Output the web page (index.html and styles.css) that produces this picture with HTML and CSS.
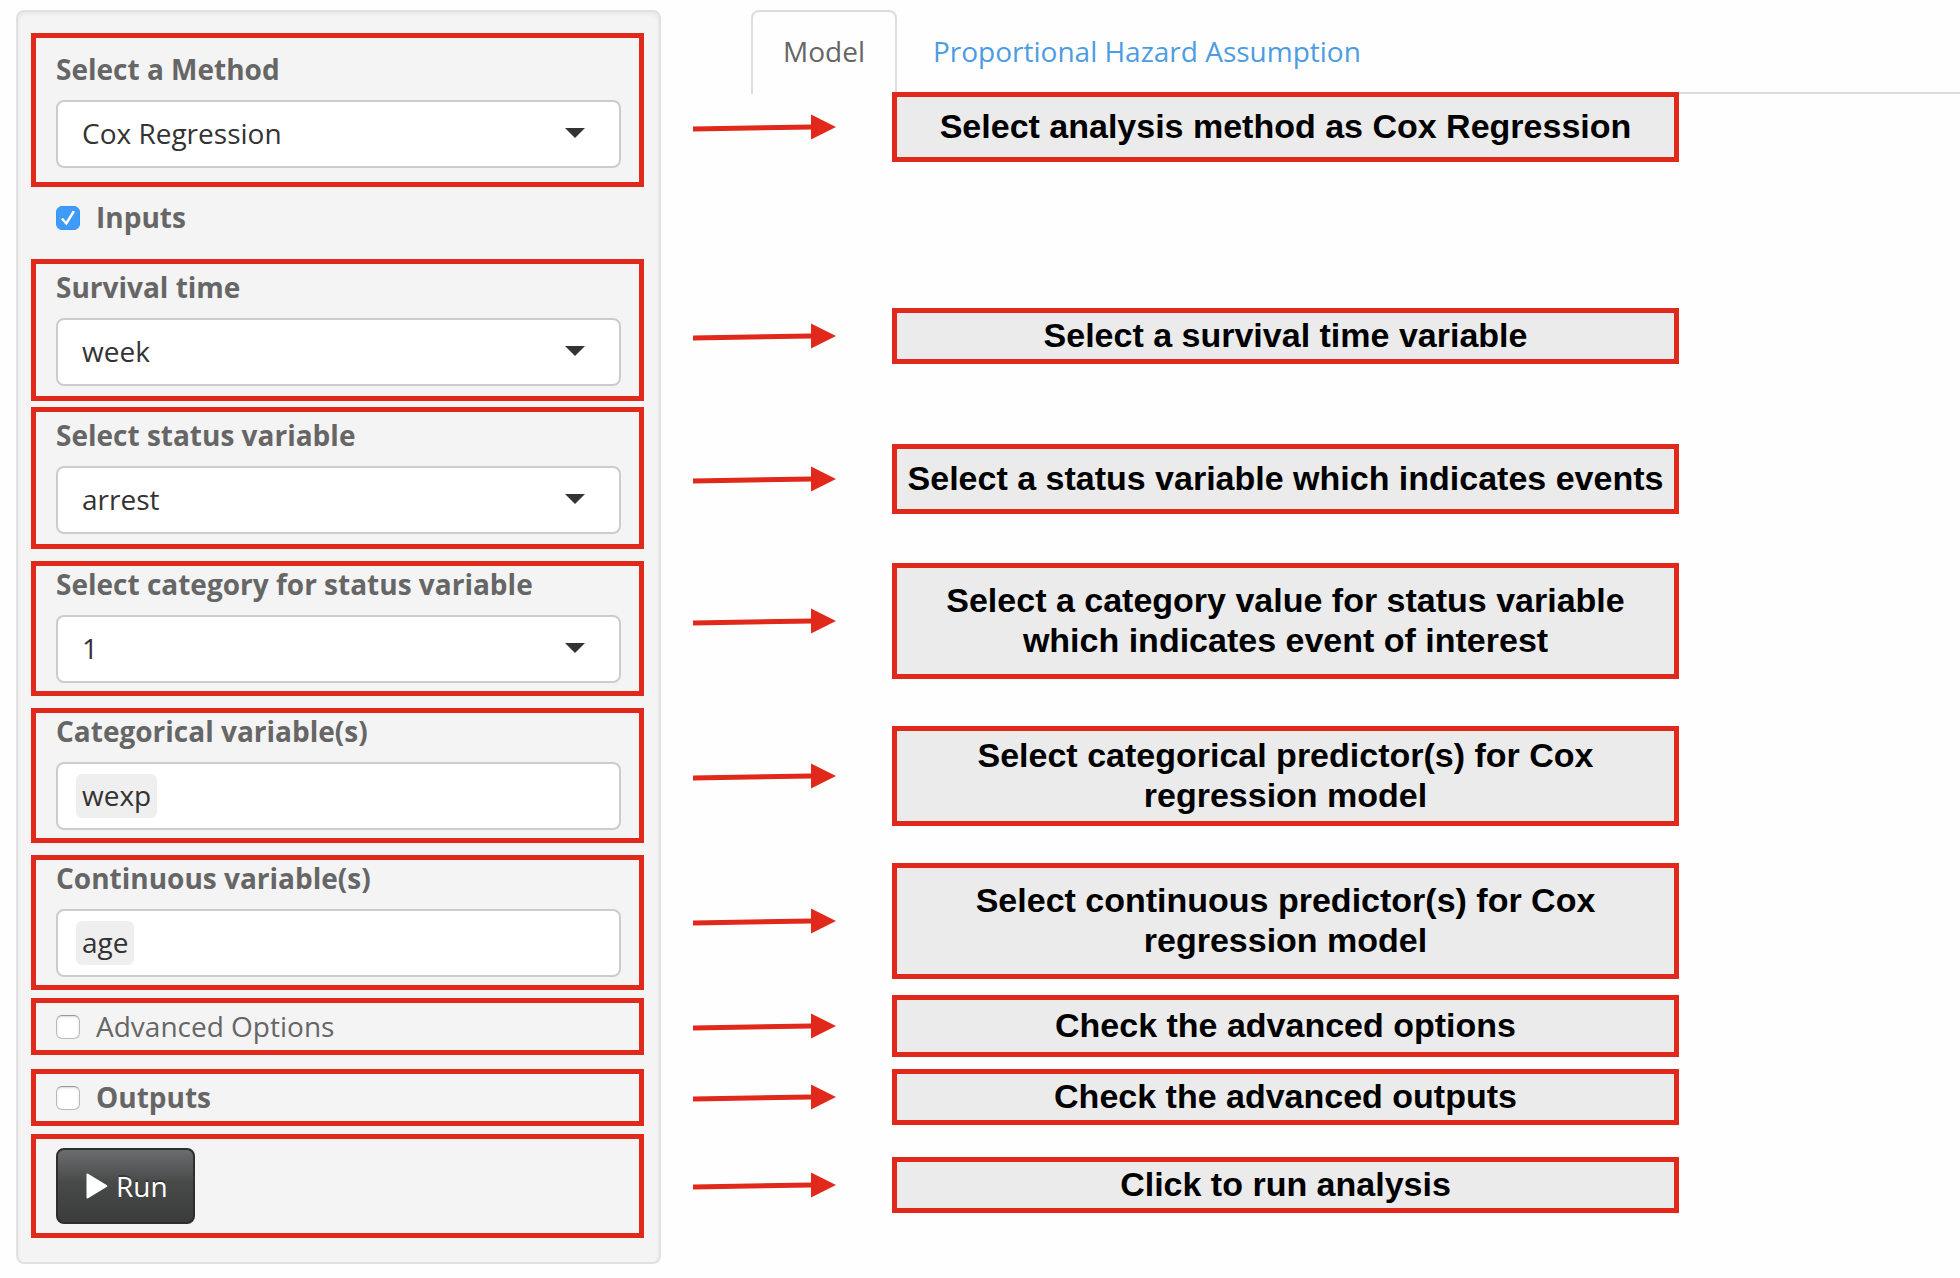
FILE: index.html
```html
<!DOCTYPE html>
<html lang="en">
<head>
<meta charset="utf-8">
<title>Cox Regression</title>
<link rel="stylesheet" href="styles.css">
</head>
<body>
<svg class="defs" aria-hidden="true">
  <symbol id="arrow" viewBox="0 0 143 26">
    <path d="M0 12.5L119 10.500V15.500L0 17.500Z"/>
    <path d="M118 0.500L143 13L118 25.500Z"/>
  </symbol>
</svg>
<div class="page">
  <form class="sidebar">
    <div class="step step-roomy">
      <label class="caption" for="method">Select a Method</label>
      <div class="picker"><select id="method"><option>Cox Regression</option></select></div>
    </div>
    <label class="check check-inputs strong"><input type="checkbox" checked>Inputs</label>
    <div class="step">
      <label class="caption" for="time">Survival time</label>
      <div class="picker"><select id="time"><option>week</option></select></div>
    </div>
    <div class="step space-xs">
      <label class="caption" for="status">Select status variable</label>
      <div class="picker"><select id="status"><option>arrest</option></select></div>
    </div>
    <div class="step step-tight space-m">
      <label class="caption" for="category">Select category for status variable</label>
      <div class="picker"><select id="category"><option>1</option></select></div>
    </div>
    <div class="step step-tight space-m">
      <label class="caption" for="categorical">Categorical variable(s)</label>
      <div class="tags"><span class="tag">wexp</span><input id="categorical" type="text"></div>
    </div>
    <div class="step step-tight space-m">
      <label class="caption" for="continuous">Continuous variable(s)</label>
      <div class="tags"><span class="tag">age</span><input id="continuous" type="text"></div>
    </div>
    <div class="step step-check space-s">
      <label class="check"><input type="checkbox">Advanced Options</label>
    </div>
    <div class="step step-check space-l">
      <label class="check strong"><input type="checkbox">Outputs</label>
    </div>
    <div class="step step-run space-s">
      <button class="run" type="button"><svg viewBox="0 0 22 26" aria-hidden="true"><path d="M0.500 1.500Q0.500 0 2 0.800L21 12.200Q22 13 21 13.800L2 25.200Q0.500 26 0.500 24.500Z"/></svg>Run</button>
    </div>
  </form>
  <main class="content">
    <nav class="tabs">
      <a class="tab active" href="#model">Model</a>
      <a class="tab" href="#assumption">Proportional Hazard Assumption</a>
    </nav>
    <ol class="notes">
      <li class="note note-method"><svg class="arrow"><use href="#arrow"/></svg><p class="callout">Select analysis method as Cox Regression</p></li>
      <li class="note note-time"><svg class="arrow"><use href="#arrow"/></svg><p class="callout slim">Select a survival time variable</p></li>
      <li class="note note-status"><svg class="arrow"><use href="#arrow"/></svg><p class="callout">Select a status variable which indicates events</p></li>
      <li class="note note-category"><svg class="arrow"><use href="#arrow"/></svg><p class="callout tall">Select a category value for status variable<br>which indicates event of interest</p></li>
      <li class="note note-categorical"><svg class="arrow"><use href="#arrow"/></svg><p class="callout double">Select categorical predictor(s) for Cox<br>regression model</p></li>
      <li class="note note-continuous"><svg class="arrow"><use href="#arrow"/></svg><p class="callout tall">Select continuous predictor(s) for Cox<br>regression model</p></li>
      <li class="note note-options"><svg class="arrow"><use href="#arrow"/></svg><p class="callout medium">Check the advanced options</p></li>
      <li class="note note-outputs"><svg class="arrow"><use href="#arrow"/></svg><p class="callout slim">Check the advanced outputs</p></li>
      <li class="note note-run"><svg class="arrow"><use href="#arrow"/></svg><p class="callout slim">Click to run analysis</p></li>
    </ol>
  </main>
</div>
</body>
</html>
```
FILE: styles.css
```css
:root {
  --red: #e0291b;
  --text: #666;
}

* { box-sizing: border-box; }

body {
  margin: 0;
  background: #fefefe;
  color: var(--text);
  font: 28px/36px "Open Sans", sans-serif;
}

.defs {
  position: absolute;
  width: 0;
  height: 0;
}

.page {
  display: grid;
  grid-template-columns: 645fr 1299fr;
  align-items: start;
  padding: 10px 0 14px 16px;
}

/* Sidebar form */
.sidebar {
  display: flex;
  flex-direction: column;
  padding: 21px 15px 24px 13px;
  border: 2px solid #e1e1e1;
  border-radius: 8px;
  background: #f4f4f4;
  box-shadow: inset 0 2px 4px rgba(0, 0, 0, 0.06);
}

.step {
  padding: 5px 18px 10px 20px;
  border: 5px solid var(--red);
}

.step-roomy { padding-top: 13px; padding-bottom: 14px; }
.step-tight { padding-top: 0; padding-bottom: 8px; }
.step-check { padding-top: 5px; padding-bottom: 6px; }
.step-run { padding-top: 9px; padding-bottom: 9px; }

.space-xs { margin-top: 6px; }
.space-s { margin-top: 8px; }
.space-m { margin-top: 12px; }
.space-l { margin-top: 14px; }

.caption {
  display: block;
  margin-bottom: 13px;
  font-weight: 700;
}

.picker { position: relative; }

.picker::after {
  content: "";
  position: absolute;
  top: 28px;
  right: 36px;
  border: 10px solid transparent;
  border-top-color: #333;
  border-bottom: 0;
  pointer-events: none;
}

.picker select,
.tags {
  display: block;
  width: 100%;
  height: 68px;
  border: 2px solid #ccc;
  border-radius: 8px;
  background: #fff;
  color: #333;
}

.picker select {
  appearance: none;
  padding: 0 60px 2px 24px;
  font: inherit;
}

.tags {
  display: flex;
  align-items: center;
  padding: 0 18px;
}

.tag {
  padding: 3px 6px 5px;
  border-radius: 6px;
  background: #efefef;
}

.tags input {
  flex: 1;
  min-width: 0;
  border: 0;
  background: none;
  font: inherit;
  outline: none;
}

.check {
  display: flex;
  align-items: center;
  gap: 16px;
}

.check-inputs { padding: 12px 25px 24px; }

.strong { font-weight: 700; }

.check input {
  appearance: none;
  flex: none;
  width: 24px;
  height: 24px;
  margin: 2px 0 0;
  border: 1px solid #b9b9b9;
  border-top-color: #999;
  border-radius: 6px;
  background: #fff;
  box-shadow: inset 0 1px 2px rgba(0, 0, 0, 0.15);
}

.check input:checked {
  display: grid;
  place-items: center;
  border-color: #3b93f0;
  background: #3f9bfa;
  box-shadow: none;
}

.check input:checked::before {
  content: "";
  width: 14px;
  height: 15px;
  background: #fff;
  clip-path: polygon(0 58%, 14% 48%, 36% 74%, 84% 0, 100% 9%, 39% 100%);
}

.run {
  display: flex;
  align-items: center;
  gap: 8px;
  height: 76px;
  padding: 0 25px 0 28px;
  border: 2px solid #2d2e2e;
  border-radius: 8px;
  background: linear-gradient(#6b6c6e, #484a4a 45%, #3b3c3b);
  color: #fff;
  font: inherit;
  text-shadow: 0 -2px 0 rgba(0, 0, 0, 0.3);
}

.run svg {
  width: 22px;
  height: 26px;
  fill: #fff;
}

/* Tabs */
.tabs {
  display: flex;
  gap: 4px;
  margin-left: 90px;
  border-bottom: 2px solid #ddd;
}

.tab {
  margin-bottom: -2px;
  padding: 21px 30px 25px;
  border: 2px solid transparent;
  border-bottom: 0;
  border-radius: 8px 8px 0 0;
  color: #4c9ce3;
  text-decoration: none;
}

.tab.active {
  border-color: #ddd;
  background: #fefefe;
  color: var(--text);
}

/* Notes beside each step */
.notes {
  position: relative;
  margin: -2px 0 0;
  padding: 0 281px 0 32px;
  list-style: none;
}

.note {
  display: grid;
  grid-template-columns: 143px 1fr;
  align-items: center;
  gap: 56px;
}

.note-time { margin-top: 146px; }
.note-status { margin-top: 80px; }
.note-category { margin-top: 49px; }
.note-categorical { margin-top: 47px; }
.note-continuous { margin-top: 37px; }
.note-options { margin-top: 16px; }
.note-outputs { margin-top: 12px; }
.note-run { margin-top: 32px; }

.arrow {
  width: 143px;
  height: 26px;
  fill: var(--red);
}

.callout {
  margin: 0;
  padding: 9px 4px 11px;
  border: 5px solid var(--red);
  background: #ebebeb;
  color: #000;
  font: 700 34px/40px "Liberation Sans", Arial, sans-serif;
  text-align: center;
}

.callout.slim { padding-block: 2px 4px; }
.callout.medium { padding-block: 5px 7px; }
.callout.double { padding-block: 4px 6px; }
.callout.tall { padding-block: 12px 14px; }
```
